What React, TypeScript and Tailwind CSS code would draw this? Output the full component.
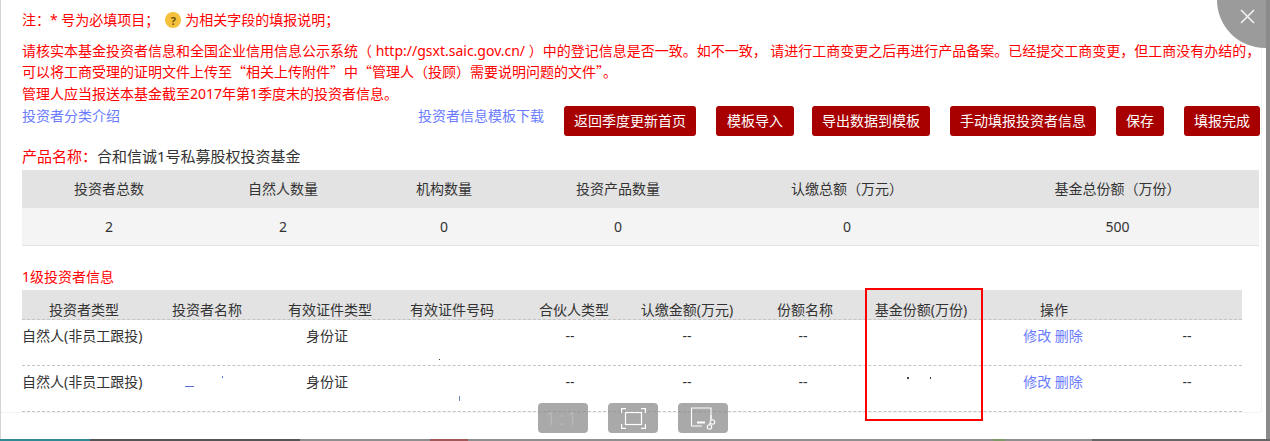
const summaryHead = ['投资者总数', '自然人数量', '机构数量', '投资产品数量', '认缴总额（万元）', '基金总份额（万份）'];
const summaryVals = ['2', '2', '0', '0', '0', '500'];
const investorHead = ['投资者类型', '投资者名称', '有效证件类型', '有效证件号码', '合伙人类型', '认缴金额(万元)', '份额名称', '基金份额(万份)', '操作', ''];
const buttons = [
  { label: '返回季度更新首页', width: 'w-[132px]', gap: 'ml-0' },
  { label: '模板导入', width: 'w-[78px]', gap: 'ml-[20px]' },
  { label: '导出数据到模板', width: 'w-[118px]', gap: 'ml-[18px]' },
  { label: '手动填报投资者信息', width: 'w-[146px]', gap: 'ml-[20px]' },
  { label: '保存', width: 'w-[48px]', gap: 'ml-[20px]' },
  { label: '填报完成', width: 'w-[76px]', gap: 'ml-[20px]' },
];

function Quote({ children }: { children: string }) {
  return <span className="font-['Noto_Sans_CJK_SC',sans-serif]">{children}</span>;
}

function InvestorRow() {
  return (
    <div className="grid h-[46px] grid-cols-[124px_122px_124px_120px_124px_102px_134px_98px_168px_98px_1fr] border-b border-dashed border-[#c4c4c4] pt-[6px] text-[#333]">
      <div className="whitespace-nowrap">自然人(非员工跟投)</div>
      <div />
      <div className="pr-[6px] text-center">身份证</div>
      <div />
      <div className="pr-[8px] text-center">--</div>
      <div className="text-center">--</div>
      <div className="pr-[4px] text-center">--</div>
      <div />
      <div className="pr-[2px] text-center text-[#6a7bff]">修改 删除</div>
      <div className="text-center">--</div>
    </div>
  );
}

export default function App() {
  return (
    <div className="relative h-[441px] w-[1270px] overflow-hidden bg-[#8a8a8a] font-['Noto_Sans','Noto_Sans_CJK_SC',sans-serif] text-[14px] leading-[20px]">
      <div className="flex h-[439px]">
        <div className="w-[1px] bg-[#d4d4d4]" />
        <div className="relative h-[439px] w-[1265px] overflow-hidden bg-white">
          <div className="h-[413px] w-[1261px] rounded-br-[4px] border-b border-r border-[#f3f3f3] pl-[21px] pt-[10px]">
            {/* 说明 */}
            <div className="flex items-center text-[#f00]">
              <span>注：* 号为必填项目；</span>
              <span className="ml-[6px] mr-[4px] flex h-[16px] w-[16px] items-center justify-center rounded-full bg-[#f5c13c] text-[11px] font-bold leading-none text-[#6b5310]">?</span>
              <span>为相关字段的填报说明；</span>
            </div>
            <div className="mt-[11px] whitespace-nowrap text-[#f00]">
              请核实本基金投资者信息和全国企业信用信息公示系统（ http://gsxt.saic.gov.cn/ ）中的登记信息是否一致。如不一致， 请进行工商变更之后再进行产品备案。已经提交工商变更，但工商没有办结的，
            </div>
            <div className="whitespace-nowrap text-[#f00]">
              可以将工商受理的证明文件上传至<Quote>“</Quote>相关上传附件<Quote>”</Quote>中<Quote>“</Quote>管理人（投顾）需要说明问题的文件<Quote>”</Quote>。
            </div>
            <div className="mt-[2px] text-[#f00]">管理人应当报送本基金截至2017年第1季度末的投资者信息。</div>

            {/* 操作栏 */}
            <div className="mt-[1px] flex h-[31px] items-start">
              <a className="mt-[1px] text-[#6a7bff]">投资者分类介绍</a>
              <a className="ml-[298px] mt-[1px] text-[#6a7bff]">投资者信息模板下载</a>
              <div className="ml-[20px] flex">
                {buttons.map((b) => (
                  <button key={b.label} type="button" className={`${b.width} ${b.gap} mt-[1px] h-[30px] whitespace-nowrap rounded-[3px] bg-[#a80000] text-center text-white`}>
                    {b.label}
                  </button>
                ))}
              </div>
            </div>

            <div className="mt-[10px] text-[15px] text-[#333]">
              <span className="text-[#f00]">产品名称：</span>合和信诚1号私募股权投资基金
            </div>

            {/* 汇总 */}
            <div className="mt-[4px] w-[1237px] border-b border-[#e2e2e2] text-center text-[#333]">
              <div className="grid h-[38px] grid-cols-[174px_174px_148px_200px_258px_1fr] items-center bg-[#e3e3e3]">
                {summaryHead.map((t) => (
                  <div key={t}>{t}</div>
                ))}
              </div>
              <div className="grid h-[37px] grid-cols-[174px_174px_148px_200px_258px_1fr] items-center bg-[#f4f4f4]">
                {summaryVals.map((t, i) => (
                  <div key={i}>{t}</div>
                ))}
              </div>
            </div>

            <div className="mt-[21px] text-[#f00]">1级投资者信息</div>

            {/* 投资者列表 */}
            <div className="mt-[3px] w-[1220px]">
              <div className="grid h-[30px] grid-cols-[124px_122px_124px_120px_124px_102px_134px_98px_168px_98px_1fr] items-end border-b border-dashed border-[#c4c4c4] bg-[#e3e3e3] text-center leading-[18px] text-[#333]">
                {investorHead.map((t, i) => (
                  <div key={i} className="whitespace-nowrap">{t}</div>
                ))}
              </div>
              <InvestorRow />
              <InvestorRow />
            </div>
          </div>

          {/* 右上角关闭 */}
          <div className="absolute left-[1216px] top-[-48px] h-[96px] w-[96px] rounded-full bg-[#9b9b9b]" />
          <svg className="absolute left-[1239px] top-[9px]" width="15" height="15" viewBox="0 0 15 15" fill="none" stroke="#f2f2f2" strokeWidth="1.6">
            <path d="M1 1l13 13M14 1L1 14" />
          </svg>
        </div>
      </div>

      {/* 底部露出的背景 */}
      <div className="flex h-[2px]">
        <div className="w-[90px] bg-[#2f8a96]" />
        <div className="w-[210px] bg-[#555]" />
        <div className="w-[130px] bg-[#8f8f8f]" />
        <div className="w-[38px] bg-[#a05a5a]" />
        <div className="w-[525px] bg-[#8f8f8f]" />
        <div className="w-[12px] bg-[#7f9a6a]" />
        <div className="w-[87px] bg-[#8f8f8f]" />
        <div className="flex-1 bg-[#666]" />
      </div>

      {/* 红框标注 */}
      <div className="absolute left-[865px] top-[288px] h-[133px] w-[118px] border-2 border-[#f00]" />

      {/* 遮挡残留的小点 */}
      <div className="absolute left-[185px] top-[386px] h-[1px] w-[9px] bg-[#5a6ae0]" />
      <div className="absolute left-[222px] top-[376px] h-[2px] w-[1px] bg-[#5a6ae0]" />
      <div className="absolute left-[439px] top-[359px] h-[1px] w-[1px] bg-[#553311]" />
      <div className="absolute left-[459px] top-[396px] h-[5px] w-[1px] bg-[#6a8ac0]" />
      <div className="absolute left-[907px] top-[377px] h-[2px] w-[2px] bg-[#444]" />
      <div className="absolute left-[930px] top-[377px] h-[2px] w-[1px] bg-[#335]" />

      {/* 图片工具条 */}
      <div className="absolute left-[538px] top-[403px] flex gap-[20px]">
        <div className="flex h-[30px] w-[50px] items-center justify-center rounded-[4px] bg-[#8c8c8c]/75 text-[19px] font-light tracking-[3px] text-[#bdbdbd]">1:1</div>
        <div className="flex h-[30px] w-[50px] items-center justify-center rounded-[4px] bg-[#8c8c8c]/75">
          <svg width="25" height="21" viewBox="0 0 25 21" fill="none" stroke="#fff" strokeWidth="1.2">
            <path d="M.6 5V.6h4.4M20 .6h4.4V5M24.4 16v4.4H20M5 20.4H.6V16" />
            <rect x="4.5" y="4.5" width="16" height="12" />
          </svg>
        </div>
        <div className="flex h-[30px] w-[50px] items-center justify-center rounded-[4px] bg-[#8c8c8c]/75">
          <svg width="26" height="24" viewBox="0 0 26 24" fill="none" stroke="#fff" strokeWidth="1.1">
            <path d="M21 13V2H1.5v18H12" />
            <path d="M7 16.5h8" strokeWidth="2" />
            <circle cx="22.5" cy="16" r="2.2" />
            <circle cx="19.5" cy="21" r="2.2" />
            <path d="M20.5 17l-1.5 1.5M21 9v5" />
          </svg>
        </div>
      </div>
    </div>
  );
}
